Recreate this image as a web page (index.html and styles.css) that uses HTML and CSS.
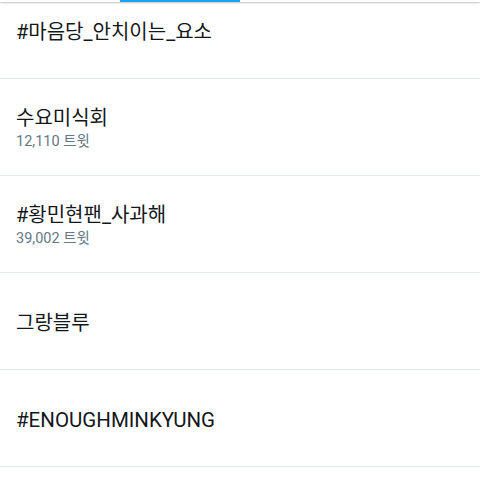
FILE: index.html
```html
<!DOCTYPE html>
<html lang="ko">
<head>
<meta charset="utf-8">
<link rel="stylesheet" href="styles.css">
</head>
<body>
<div class="tabbar"><div class="indicator"></div></div>
<ul class="trends">
  <li class="trend"><div class="title">#마음당_안치이는_요소</div></li>
  <li class="trend"><div class="title">수요미식회</div><div class="count">12,110 트윗</div></li>
  <li class="trend"><div class="title">#황민현팬_사과해</div><div class="count">39,002 트윗</div></li>
  <li class="trend"><div class="title">그랑블루</div></li>
  <li class="trend"><div class="title title-latin">#ENOUGHMINKYUNG</div></li>
  <li class="trend"><div class="title">&nbsp;</div></li>
</ul>
</body>
</html>
```
FILE: styles.css
```css
html, body {
  margin: 0;
  padding: 0;
  background: #ffffff;
  overflow: hidden;
  height: 480px;
}
body {
  font-family: Roboto, "Noto Sans CJK KR", sans-serif;
  color: #14171a;
}
.tabbar {
  position: absolute;
  top: 0;
  left: 0;
  right: 0;
  height: 2px;
  background: #ffffff;
  box-shadow: 0 1px 2px rgba(0, 0, 0, 0.25);
  z-index: 2;
}
.indicator {
  position: absolute;
  left: 120px;
  width: 120px;
  top: 0;
  height: 2px;
  background: #1da1f2;
}
.trends {
  list-style: none;
  margin: -18px 0 0 0;
  padding: 0;
}
.trend {
  box-sizing: border-box;
  height: 97px;
  border-bottom: 1px solid #e1e8ed;
  display: flex;
  flex-direction: column;
  justify-content: center;
  padding: 3px 16px 0;
}
.title {
  font-size: 20px;
  line-height: 24px;
}
.title-latin {
  font-size: 20.5px;
}
.count {
  font-size: 14.5px;
  line-height: 18px;
  color: #657786;
  margin-top: 3px;
}
```
